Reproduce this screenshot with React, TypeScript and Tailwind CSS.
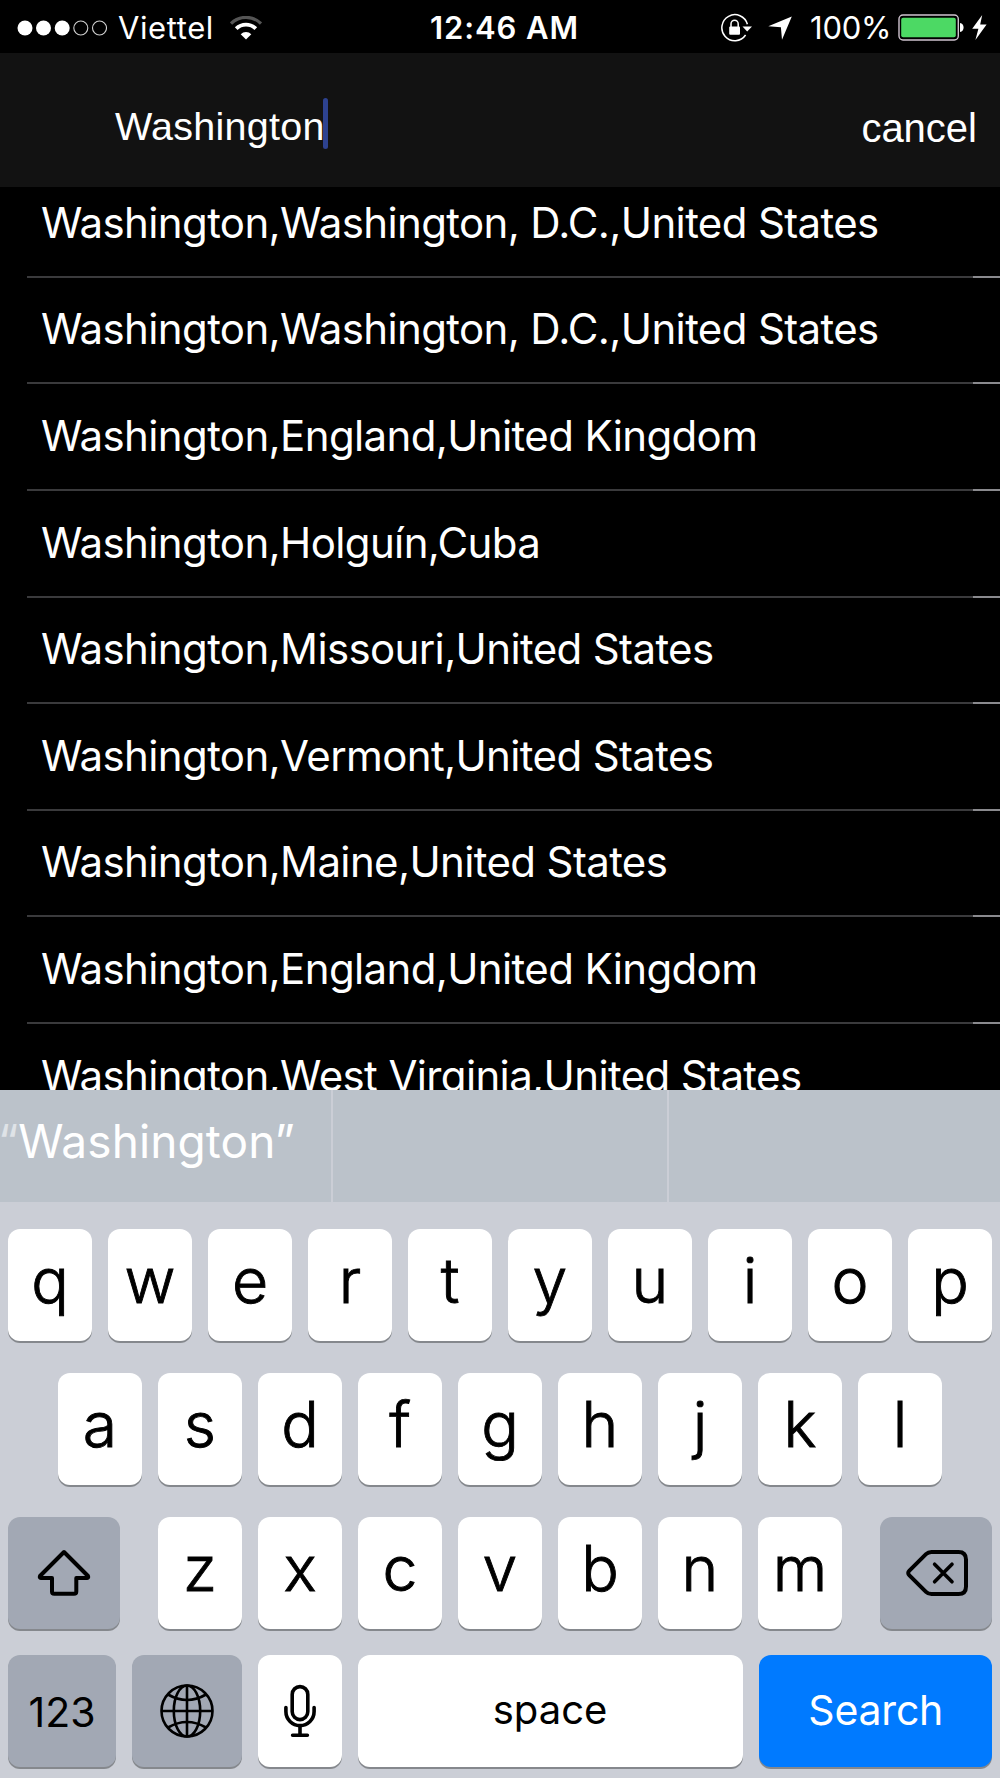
import { useState } from 'react'
import type { ReactNode } from 'react'

const RESULTS = [
  'Washington,Washington, D.C.,United States',
  'Washington,Washington, D.C.,United States',
  'Washington,England,United Kingdom',
  'Washington,Holguín,Cuba',
  'Washington,Missouri,United States',
  'Washington,Vermont,United States',
  'Washington,Maine,United States',
  'Washington,England,United Kingdom',
  'Washington,West Virginia,United States',
]

const KEY_SHADOW = 'h-[112px] rounded-[12px] shadow-[0_2px_0_#85888d] flex items-center justify-center shrink-0'

function SignalDots() {
  return (
    <svg width="90" height="16" viewBox="0 0 90 16" className="shrink-0">
      <circle cx="8" cy="8" r="7.5" fill="#fff" />
      <circle cx="26.5" cy="8" r="7.5" fill="#fff" />
      <circle cx="45.2" cy="8" r="7.5" fill="#fff" />
      <circle cx="63.8" cy="8" r="7" fill="none" stroke="#d0d0d0" strokeWidth="1.1" />
      <circle cx="82.5" cy="8" r="7" fill="none" stroke="#d0d0d0" strokeWidth="1.1" />
    </svg>
  )
}

function WifiIcon() {
  return (
    <svg width="32" height="24" viewBox="0 0 32 24" fill="none" className="shrink-0">
      <path d="M1 7.5 A21.5 21.5 0 0 1 31 7.5" stroke="#555" strokeWidth="3.2" />
      <path d="M6.2 12.7 A14 14 0 0 1 25.8 12.7" stroke="#fff" strokeWidth="3.8" />
      <path d="M16 23.6 L10.7 18.2 A7.6 7.6 0 0 1 21.3 18.2 Z" fill="#fff" />
    </svg>
  )
}

function RotationLockIcon() {
  return (
    <svg width="32" height="30" viewBox="0 0 32 30" fill="none" className="shrink-0">
      <path d="M26.4 11.3 A13 13 0 1 0 24.6 22" stroke="#fff" strokeWidth="1.5" />
      <path d="M21.5 13.4 H31 L26.2 18.4 Z" fill="#fff" />
      <rect x="8.2" y="13.4" width="10.8" height="8.4" rx="1" fill="#fff" />
      <path d="M10 14 V10.9 A3.6 3.6 0 0 1 17.2 10.9 V14" stroke="#fff" strokeWidth="1.5" />
    </svg>
  )
}

function LocationIcon() {
  return (
    <svg width="24" height="24" viewBox="0 0 24 24" className="shrink-0">
      <path d="M0.3 10.2 L23.8 0.4 L14 23.8 L12.9 11.3 Z" fill="#fff" />
    </svg>
  )
}

function BatteryIcon() {
  return (
    <svg width="67" height="27" viewBox="0 0 67 27" className="shrink-0">
      <rect x="1" y="1" width="59.3" height="25" rx="4" fill="#000" stroke="#cfc3cf" strokeWidth="1.4" />
      <rect x="3.2" y="3.7" width="54.6" height="19.6" rx="2" fill="#4cd964" />
      <path d="M62 9 C66.8 9.5 66.8 17.5 62 18 Z" fill="#fff" />
    </svg>
  )
}

function BoltIcon() {
  return (
    <svg width="15" height="25" viewBox="0 0 15 25" className="shrink-0">
      <path d="M10.2 0 L0.2 13.8 H6.4 L3.4 25 L14.6 9.6 H8.2 Z" fill="#fff" />
    </svg>
  )
}

function ShiftIcon() {
  return (
    <svg width="54" height="48" viewBox="0 0 54 48" fill="none" stroke="#000" strokeWidth="4" strokeLinejoin="round">
      <path d="M27 3 L3 27 Q2.2 28.8 4 29 H15 V42.5 Q15 44.8 17.3 44.8 H37 Q39.3 44.8 39.3 42.5 V29 H50 Q51.8 28.8 51 27 Z" />
    </svg>
  )
}

function DeleteIcon() {
  return (
    <svg width="62" height="46" viewBox="0 0 62 46" fill="none" stroke="#000" strokeLinecap="round" strokeLinejoin="round">
      <path d="M2.2 23 Q2.2 21.8 3.4 20.6 L20 4.2 Q22.2 2 25.5 2 H52.5 Q60 2 60 9.5 V36.5 Q60 44 52.5 44 H25.5 Q22.2 44 20 41.8 L3.4 25.4 Q2.2 24.2 2.2 23 Z" strokeWidth="4" />
      <path d="M28.6 14.2 L46 31.8 M46 14.2 L28.6 31.8" strokeWidth="3.6" />
    </svg>
  )
}

function GlobeIcon() {
  return (
    <svg width="54" height="54" viewBox="0 0 54 54" fill="none" stroke="#000" strokeWidth="2.6">
      <circle cx="27" cy="27" r="25.5" />
      <ellipse cx="27" cy="27" rx="13.2" ry="25.5" />
      <path d="M27 1.5 V52.5 M1.5 27 H52.5" />
      <path d="M8 10.5 Q27 21.5 46 10.5 M8 43.5 Q27 32.5 46 43.5" />
    </svg>
  )
}

function MicIcon() {
  return (
    <svg width="32" height="54" viewBox="0 0 32 54" fill="none" stroke="#000" strokeWidth="3.6" strokeLinecap="round">
      <rect x="8.2" y="2.6" width="15.6" height="33" rx="7.8" />
      <path d="M1.9 23.5 V27.5 A14.1 14.1 0 0 0 30.1 27.5 V23.5" />
      <path d="M16 42 V51 M8.6 51.2 H23.4" />
    </svg>
  )
}

function LetterKey({ letter, onPress }: { letter: string; onPress: (l: string) => void }) {
  return (
    <button
      onClick={() => onPress(letter)}
      className={`${KEY_SHADOW} w-[84px] bg-white pb-[9px] text-[62.5px] font-light leading-none text-black [-webkit-text-stroke:0.9px_#000]`}
    >
      {letter}
    </button>
  )
}

function KeyRow({ letters, onPress }: { letters: string; onPress: (l: string) => void }) {
  return (
    <div className="flex gap-[16px]">
      {letters.split('').map(l => (
        <LetterKey key={l} letter={l} onPress={onPress} />
      ))}
    </div>
  )
}

function ResultRow({ children }: { children: ReactNode }) {
  return (
    <li className="flex h-[106.63px] flex-col">
      <div className="flex flex-1 items-center pb-[1.2px] pl-[41px] text-[42px] leading-none tracking-[-0.63px] whitespace-nowrap">
        {children}
      </div>
      <div className="ml-[27px] flex h-[2px]">
        <span className="flex-1 bg-[#3a3a3c]" />
        <span className="w-[27px] bg-[#8a8a8e]" />
      </div>
    </li>
  )
}

export default function App() {
  const [query, setQuery] = useState('Washington')

  const press = (l: string) => setQuery(q => q + l)

  return (
    <div className="flex h-[1778px] w-[1000px] flex-col overflow-hidden bg-black font-['Inter',sans-serif] text-white">
      {/* status bar */}
      <div className="flex h-[53px] shrink-0 items-center pt-[2px] text-[31px] leading-none whitespace-nowrap">
        <div className="flex w-[430px] items-center pl-[17px]">
          <SignalDots />
          <span className="ml-[11px] w-[100px] tracking-[0.6px]">Viettel</span>
          <span className="ml-[12px]"><WifiIcon /></span>
        </div>
        <span className="w-[291px] font-semibold tracking-[0.9px]">12:46 AM</span>
        <RotationLockIcon />
        <span className="ml-[15px]"><LocationIcon /></span>
        <span className="ml-[18px] w-[88px] tracking-[-0.2px]">100%</span>
        <BatteryIcon />
        <span className="ml-[7px]"><BoltIcon /></span>
      </div>

      {/* search field */}
      <div className="flex h-[134px] shrink-0 items-center justify-between bg-[#121212] pr-[23px] pl-[115px] font-['Liberation_Sans',Arial,sans-serif]">
        <div className="flex items-center pt-[7px]">
          <span className="pt-[6px] text-[39.5px] leading-none tracking-[0.25px]">{query}</span>
          <span className="-ml-[2px] h-[51px] w-[5px] rounded-full bg-[#2d4290]" />
        </div>
        <button className="pt-[15px] text-[40px] leading-none" onClick={() => setQuery('')}>cancel</button>
      </div>

      {/* results, scrolled a little under the search field */}
      <div className="h-[903px] shrink-0 overflow-hidden">
        <ul className="-mt-[16px]">
          {RESULTS.map((r, i) => (
            <ResultRow key={i}>{r}</ResultRow>
          ))}
        </ul>
      </div>

      {/* keyboard */}
      <div className="flex flex-1 flex-col bg-[#cbced6]">
        <div className="flex h-[112px] shrink-0 gap-[2px] text-[46px] leading-none">
          <div className="flex w-[331px] items-center bg-[#bbc2ca] pb-[10px] whitespace-nowrap">
            <span className="-ml-[2px] text-[#dfe3e7]">“</span>
            <span className="tracking-[0.1px]">{query}”</span>
          </div>
          <div className="w-[334px] bg-[#bbc2ca]" />
          <div className="flex-1 bg-[#bbc2ca]" />
        </div>

        <div className="mt-[27px] px-[8px]">
          <KeyRow letters="qwertyuiop" onPress={press} />
        </div>
        <div className="mt-[32px] flex justify-center">
          <KeyRow letters="asdfghjkl" onPress={press} />
        </div>
        <div className="mt-[32px] flex justify-between px-[8px]">
          <button className={`${KEY_SHADOW} w-[112px] bg-[#a2a8b4]`}><ShiftIcon /></button>
          <KeyRow letters="zxcvbnm" onPress={press} />
          <button className={`${KEY_SHADOW} w-[112px] bg-[#a2a8b4] pl-[1px]`} onClick={() => setQuery(q => q.slice(0, -1))}>
            <DeleteIcon />
          </button>
        </div>
        <div className="mt-[26px] flex gap-[16px] px-[8px] text-black">
          <button className={`${KEY_SHADOW} w-[108px] bg-[#a2a8b4] pt-[2px] text-[41px] leading-none`}>123</button>
          <button className={`${KEY_SHADOW} w-[109.5px] bg-[#a2a8b4]`}><GlobeIcon /></button>
          <button className={`${KEY_SHADOW} w-[84px] bg-white`}><MicIcon /></button>
          <button className={`${KEY_SHADOW} w-[385px] bg-white pb-[2px] text-[40px] leading-none`} onClick={() => press(' ')}>
            space
          </button>
          <button className={`${KEY_SHADOW} w-[233.5px] bg-[#007aff] pb-[2px] pl-[1px] text-[41px] leading-none tracking-[-0.2px] text-white`}>
            Search
          </button>
        </div>
      </div>
    </div>
  )
}
